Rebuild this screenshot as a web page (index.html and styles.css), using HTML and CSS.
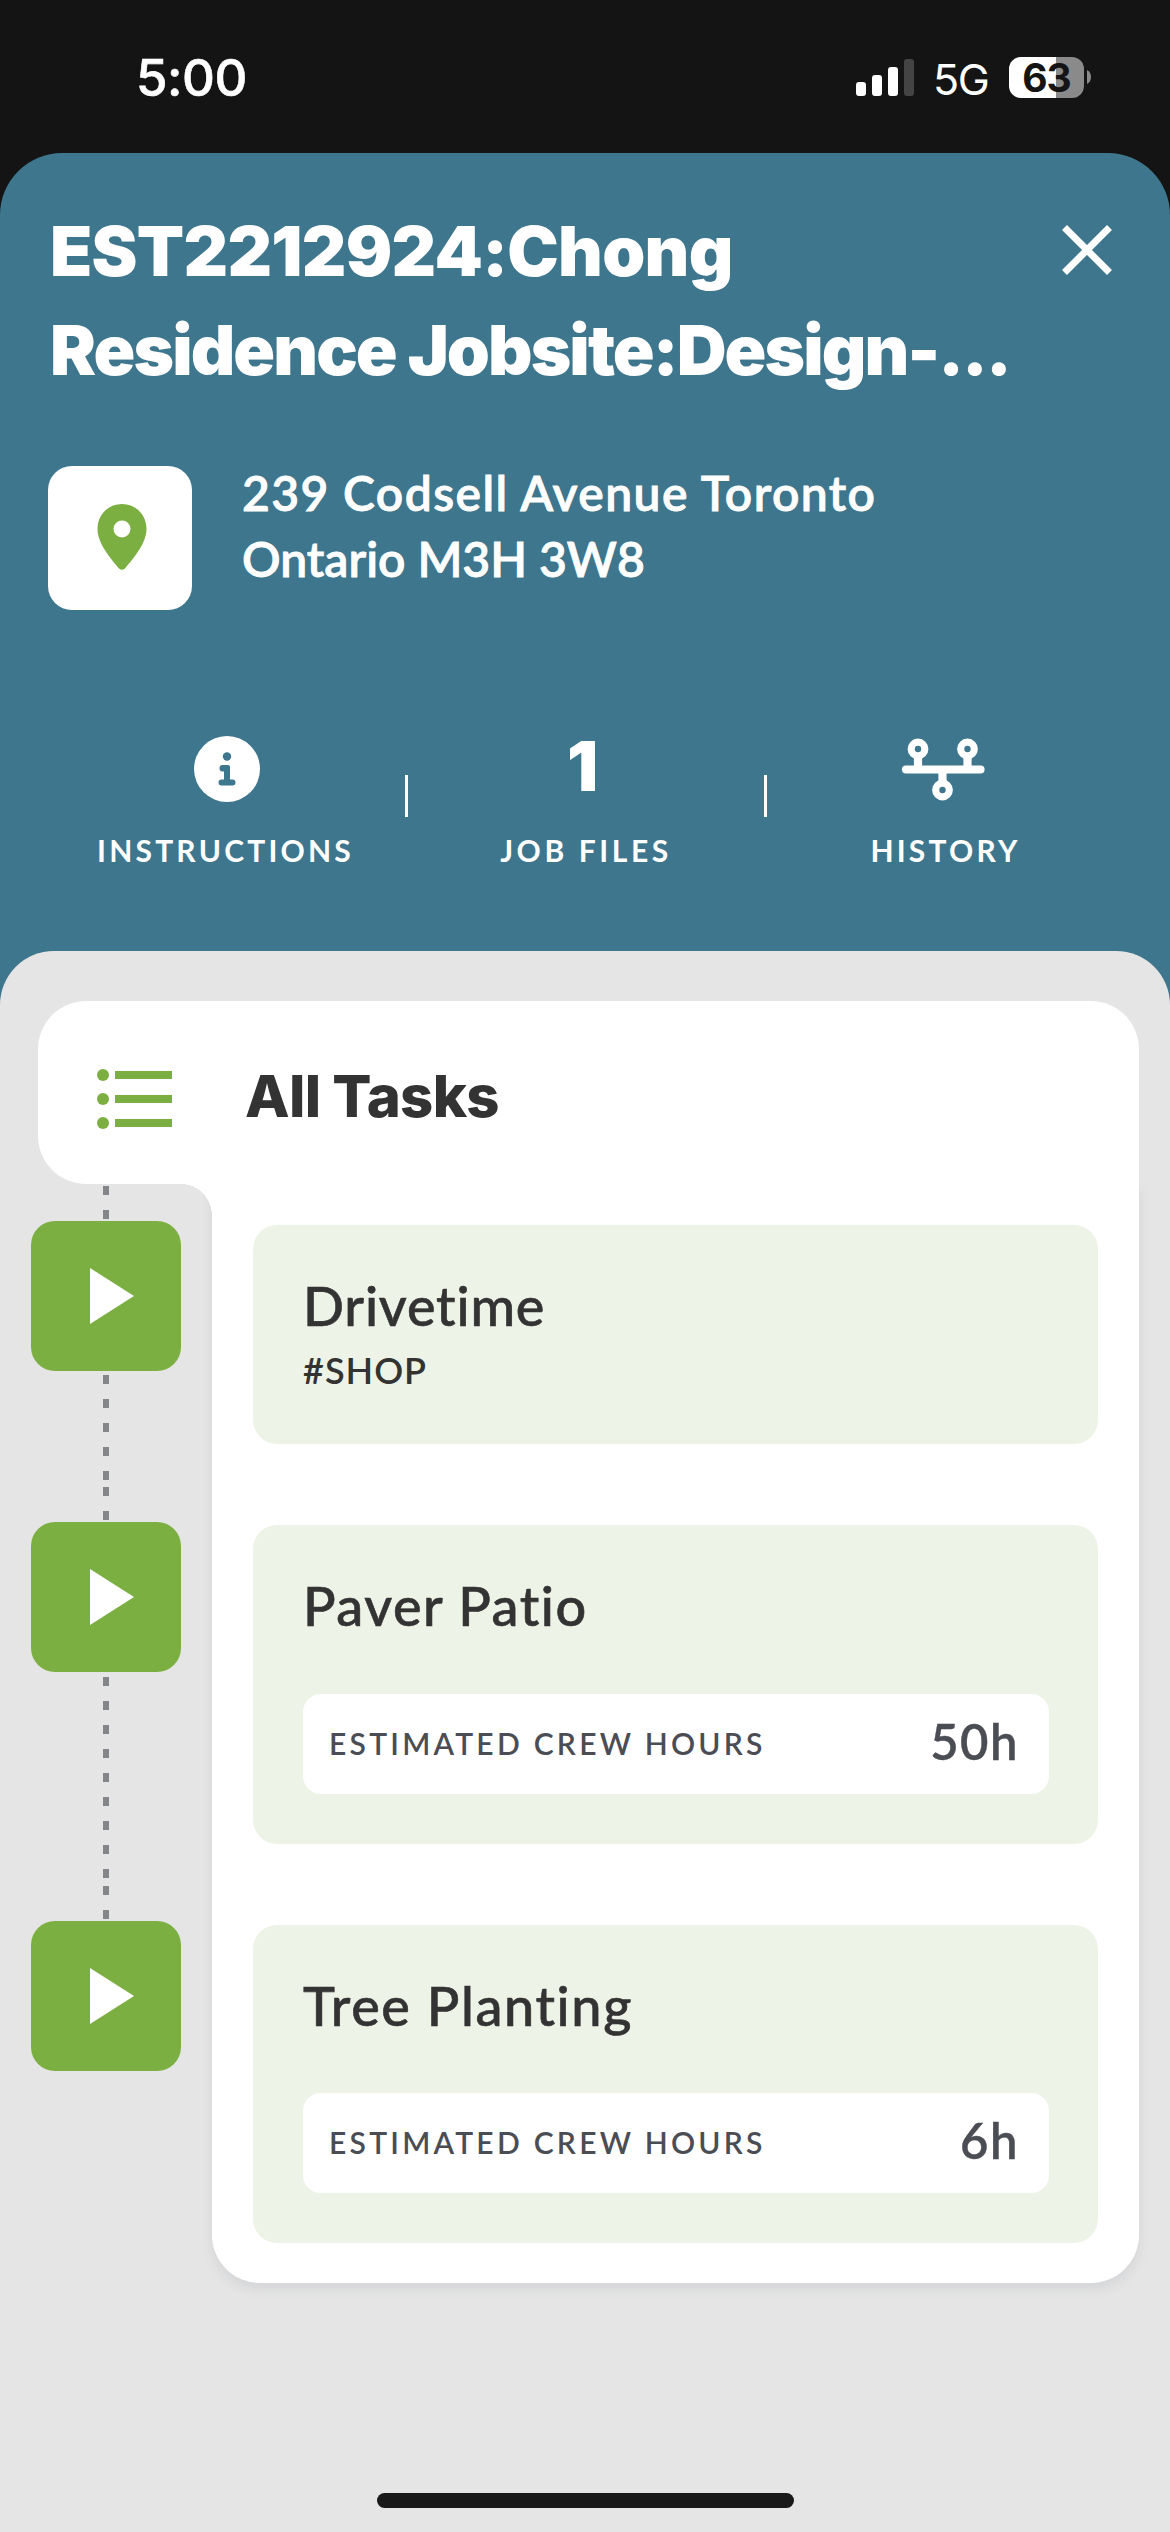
FILE: index.html
```html
<!DOCTYPE html>
<html lang="en">
<head>
<meta charset="utf-8">
<title>Job tasks</title>
<link rel="stylesheet" href="styles.css">
</head>
<body>
<div class="screen">
  <div class="status-bar">
    <span class="clock">5:00</span>
    <div class="indicators">
      <svg class="signal" viewBox="0 0 58 37"><rect x="0" y="23" width="10" height="14" rx="3"/><rect x="16" y="16" width="10" height="21" rx="3"/><rect x="32" y="8" width="10" height="29" rx="3"/><rect class="off" x="48" y="0" width="10" height="37" rx="3"/></svg>
      <span class="network">5G</span>
      <div class="battery">63</div>
      <svg class="battery-tip" viewBox="0 0 4 14"><path d="M0 0Q4 2 4 7T0 14Z"/></svg>
    </div>
  </div>

  <main class="sheet">
    <header class="job">
      <h1 class="job-title"><span class="title-first">EST2212924:Chong</span><br><span class="title-second">Residence Jobsite:Design-...</span></h1>
      <svg class="close" viewBox="0 0 50 50"><path d="M2.500 2.500 47.500 47.500M47.500 2.500 2.500 47.500"/></svg>
    </header>

    <section class="address">
      <div class="map-tile">
        <svg class="pin" viewBox="0 0 50 66"><path fill-rule="evenodd" d="M25 0C11 0 .5 11 .5 25 .5 39 13 54 22 64.500Q25 67 28 64.500C37 54 49.500 39 49.500 25 49.500 11 39 0 25 0ZM25 16.500a8.500 8.500 0 1 1 0 17 8.500 8.500 0 0 1 0-17Z"/></svg>
      </div>
      <p class="address-text"><span class="address-first">239 Codsell Avenue Toronto</span><br><span class="address-second">Ontario M3H 3W8</span></p>
    </section>

    <nav class="stats">
      <div class="stat">
        <svg class="info" viewBox="0 0 66 66"><circle cx="33" cy="33" r="33" fill="#fff"/><g fill="#3d768d"><circle cx="33" cy="20.500" r="4.200"/><path d="M28.500 29H34q2 0 2 2V43.500H38.500q3 0 3 3t-3 3H27.500q-3 0-3-3t3-3H30V35.500H28.500q-3 0-3-3.200t3-3.300Z"/></g></svg>
        <span class="stat-label label-instructions">INSTRUCTIONS</span>
      </div>
      <i class="divider"></i>
      <div class="stat">
        <span class="stat-count">1</span>
        <span class="stat-label label-files">JOB FILES</span>
      </div>
      <i class="divider"></i>
      <div class="stat">
        <svg class="history" viewBox="0 0 84 66"><g fill="none" stroke="#fff" stroke-width="7.200"><circle cx="17" cy="13" r="6.800"/><circle cx="66.500" cy="13" r="6.800"/><circle cx="41.500" cy="54" r="6.800"/></g><path stroke="#fff" stroke-width="8.200" stroke-linecap="round" d="M5 33.500H79.500"/><path stroke="#fff" stroke-width="8.200" d="M17 21V33M66.500 21V33M41.500 34V46"/></svg>
        <span class="stat-label label-history">HISTORY</span>
      </div>
    </nav>

    <section class="panel">
      <div class="tasks-head">
        <svg class="list" viewBox="0 0 75 60"><circle cx="6" cy="6" r="6"/><circle cx="6" cy="30" r="6"/><circle cx="6" cy="54" r="6"/><path d="M18 2H75V10H18ZM18 26H75V34H18ZM18 50H75V58H18Z"/></svg>
        <h2 class="tasks-title">All Tasks</h2>
      </div>
      <div class="tasks-body">
        <div class="rail">
          <i class="dashes lead"></i>
          <div class="play"><svg viewBox="0 0 44 56"><path d="M0 0 44 28 0 56Z"/></svg></div>
          <i class="dashes short"></i><i class="dashes lead"></i>
          <div class="play"><svg viewBox="0 0 44 56"><path d="M0 0 44 28 0 56Z"/></svg></div>
          <i class="dashes long"></i><i class="dashes lead"></i>
          <div class="play"><svg viewBox="0 0 44 56"><path d="M0 0 44 28 0 56Z"/></svg></div>
        </div>
        <div class="task-list">
          <article class="task">
            <h3 class="task-name name-drive">Drivetime</h3>
            <p class="task-tag">#SHOP</p>
          </article>
          <article class="task">
            <h3 class="task-name name-patio">Paver Patio</h3>
            <div class="hours"><span class="hours-label">ESTIMATED CREW HOURS</span><span class="hours-value">50h</span></div>
          </article>
          <article class="task">
            <h3 class="task-name name-tree">Tree Planting</h3>
            <div class="hours"><span class="hours-label">ESTIMATED CREW HOURS</span><span class="hours-value">6h</span></div>
          </article>
        </div>
      </div>
      <div class="home-indicator"></div>
    </section>
  </main>
</div>
</body>
</html>
```
FILE: styles.css
```css
* { box-sizing: border-box; margin: 0; padding: 0; }
body { background: #141414; font-family: Lato, "Liberation Sans", sans-serif; font-variant-ligatures: none; }
svg { display: block; flex: none; }
span { white-space: nowrap; }
.screen { width: 1170px; height: 2532px; overflow: hidden; display: flex; flex-direction: column; background: #141414; }

.status-bar { height: 153px; flex: none; display: flex; justify-content: space-between; align-items: flex-start; padding: 57px 79px 0 136px; color: #fff; font-family: Inter, sans-serif; }
.clock { font-size: 51px; font-weight: 550; line-height: 42px; letter-spacing: -0.500px; -webkit-text-stroke: 0.6px; }
.indicators { display: flex; align-items: flex-start; }
.signal { width: 58px; height: 37px; margin: 2px 19px 0 0; fill: #fff; }
.signal .off { fill: #444; }
.network { width: 76px; font-size: 43px; font-weight: 400; line-height: 44px; letter-spacing: -1.500px; }
.battery { width: 75px; height: 41px; border-radius: 12px; background: linear-gradient(90deg, #fff 47px, #8a8a8a 47px); color: #141414; font-size: 39px; font-weight: 700; line-height: 41px; text-align: center; letter-spacing: -1px; }
.battery-tip { width: 4px; height: 14px; margin: 13px 0 0 3px; fill: #8a8a8a; }

.sheet { flex: 1; display: flex; flex-direction: column; background: #3d768d; border-radius: 62px 62px 0 0; color: #fff; }
.job { display: flex; justify-content: space-between; align-items: flex-start; padding: 49px 58px 0 50px; }
.job-title { font-family: Inter, sans-serif; font-size: 69px; font-weight: 900; line-height: 99px; }
.title-first { letter-spacing: -0.700px; }
.title-second { letter-spacing: -1.900px; }
.close { width: 50px; height: 50px; margin-top: 23px; fill: none; stroke: #fff; stroke-width: 7px; }

.address { display: flex; gap: 50px; padding: 66px 48px 0; }
.map-tile { width: 144px; height: 144px; border-radius: 24px; background: #fff; display: flex; justify-content: center; padding: 38px 0 0 3px; }
.pin { width: 50px; height: 66px; fill: #7caf41; }
.address-text { font-size: 48px; font-weight: 600; line-height: 66px; margin-top: -6px; -webkit-text-stroke: 0.8px; }
.address-first { letter-spacing: 1.400px; }
.address-second { letter-spacing: 0; }

.stats { display: grid; grid-template-columns: 359px 3px 356px 3px 357px; padding: 126px 46px 0; height: 341px; }
.stat { display: flex; flex-direction: column; align-items: center; }
.info { width: 66px; height: 66px; margin-left: 2px; }
.history { width: 84px; height: 66px; margin-right: 5px; }
.stat-count { height: 66px; font: 900 69px/60px Inter, sans-serif; margin-right: 7px; }
.stat-label { font-size: 30px; font-weight: 700; line-height: 36px; margin-top: 30px; letter-spacing: 3.200px; }
.label-files { letter-spacing: 3.600px; }
.divider { width: 3px; height: 42px; margin-top: 39px; background: #fff; }

.panel { flex: 1; display: flex; flex-direction: column; background: #e5e5e5; border-radius: 54px 54px 0 0; padding-top: 50px; color: #333; }
.tasks-head { height: 183px; margin: 0 31px 0 38px; background: #fff; border-radius: 48px 48px 0 48px; display: flex; align-items: center; padding: 13px 0 0 59px; gap: 73px; position: relative; z-index: 1; }
.list { width: 75px; height: 60px; fill: #7caf41; }
.tasks-title { font-family: Inter, sans-serif; font-size: 58px; font-weight: 800; line-height: 72px; letter-spacing: -0.700px; margin-top: -7px; }
.tasks-body { display: flex; padding-right: 31px; }
.rail { position: relative; width: 212px; display: flex; flex-direction: column; align-items: center; }
.rail::after { content: ""; position: absolute; top: 0; right: 0; width: 30px; height: 32px; background: radial-gradient(ellipse 30px 32px at 0 100%, transparent 99%, #fff 100%); }
.dashes { width: 6px; background: repeating-linear-gradient(#85868a 0 9px, transparent 9px 24px); }
.lead { height: 35px; margin-top: 2px; }
.short { height: 110px; margin-top: 4px; }
.long { height: 207px; margin-top: 5px; }
.play { width: 150px; height: 150px; flex: none; border-radius: 24px; background: #7caf41; padding: 47px 0 0 59px; }
.play svg { width: 44px; height: 56px; fill: #fff; }
.task-list { width: 927px; background: #fff; border-radius: 0 0 48px 48px; box-shadow: 0 6px 12px rgba(70, 75, 100, .1); padding: 41px 41px 40px; display: flex; flex-direction: column; gap: 81px; }
.task { background: #eef3e8; border-radius: 24px; padding: 45px 49px 50px 50px; }
.task:first-child { height: 219px; }
.task-name { font-size: 54px; font-weight: 500; line-height: 72px; -webkit-text-stroke: 0.6px; }
.name-drive { letter-spacing: 0.800px; }
.name-patio { letter-spacing: 1.500px; }
.name-tree { letter-spacing: 1.600px; }
.task-tag { font-size: 36px; font-weight: 600; line-height: 44px; margin-top: 6px; letter-spacing: 1px; }
.hours { height: 100px; margin-top: 52px; background: #fff; border-radius: 18px; color: #4b4d55; display: flex; justify-content: space-between; align-items: center; padding: 0 30px 0 26px; }
.task:last-child .hours { margin-top: 51px; }
.hours-label { font-size: 30px; font-weight: 600; letter-spacing: 3.250px; margin-top: -2px; }
.hours-value { font-size: 49px; font-weight: 600; line-height: 60px; letter-spacing: 1.500px; margin-top: -6px; -webkit-text-stroke: 0.4px; }
.home-indicator { width: 417px; height: 15px; border-radius: 8px; background: #191919; margin: auto auto 24px; }
```
